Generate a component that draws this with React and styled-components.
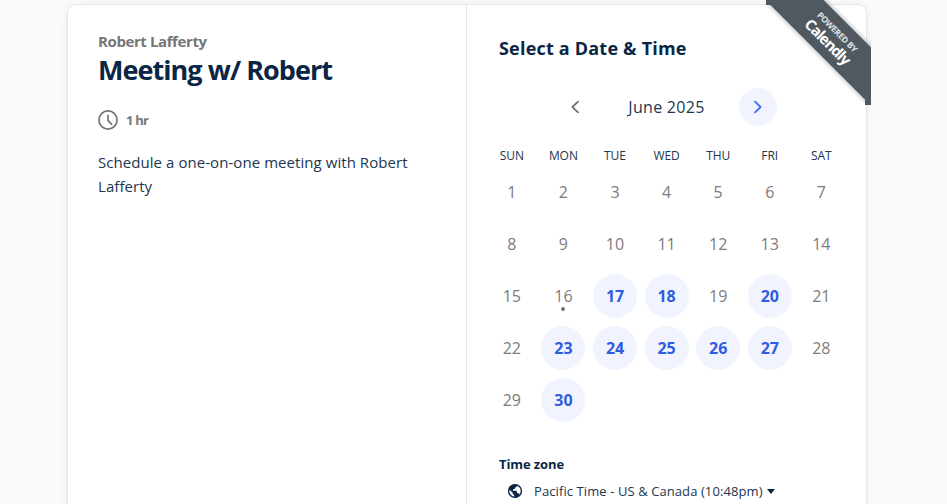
import React from "react";
import styled, { createGlobalStyle } from "styled-components";

const Global = createGlobalStyle`
  * { box-sizing: border-box; }
  html, body { margin: 0; height: 504px; overflow: hidden; background: #fafafa; }
  body { font-family: "Open Sans", "Noto Sans", sans-serif; color: #0b2545; }
  button { font: inherit; border: 0; padding: 0; background: none; }
  h1, h2, h3, p { margin: 0; }
`;

const Page = styled.main`
  height: 504px;
  overflow: hidden;
  padding: 5px 81px 0 68px;
`;
const Card = styled.section`
  position: relative;
  display: flex;
  height: 620px;
  background: #fff;
  border-radius: 8px;
  box-shadow: 0 0 0 1px rgba(26, 26, 26, 0.05), 0 1px 8px rgba(0, 0, 0, 0.08);
`;
const Details = styled.div`
  width: 399px;
  padding: 24px 30px;
  border-right: 1px solid #e7e7e7;
`;
const Text = styled.span`
  display: block;
  width: max-content;
  white-space: pre;
  font-size: ${(p) => p.$size}px;
  line-height: ${(p) => p.$line}px;
  font-weight: ${(p) => p.$weight || 400};
  letter-spacing: ${(p) => p.$track || 0}px;
  color: ${(p) => p.$color || "#213650"};
`;
const Duration = styled.div`
  display: flex;
  align-items: center;
  gap: 8px;
  height: 22px;
  margin: 22px 0 19px;
`;
const Scheduler = styled.div`
  flex: 1;
  padding: 31px 18px 0 19px;
`;
const Indent = styled.div`
  padding-left: 13px;
`;
const MonthBar = styled.div`
  display: flex;
  align-items: center;
  justify-content: space-between;
  width: 221px;
  height: 38px;
  margin: 28px 0 0 70px;
`;
const Arrow = styled.button`
  display: grid;
  place-items: center;
  width: 38px;
  height: 38px;
  border-radius: 50%;
  background: ${(p) => (p.$active ? "#f1f4ff" : "transparent")};
  color: ${(p) => (p.$active ? "#3b6bf5" : "#737373")};
`;
const Calendar = styled.div`
  display: grid;
  grid-template-columns: repeat(7, 51.6px);
  grid-template-rows: 20px repeat(5, 52px);
  margin-top: 20px;
  justify-items: center;
  align-items: center;
`;
const Weekday = styled.div`
  font-size: 12px;
  line-height: 18px;
  letter-spacing: -0.05px;
  color: #213650;
`;
const Day = styled.button`
  position: relative;
  width: 44px;
  height: 44px;
  border-radius: 50%;
  font-size: 16px;
  letter-spacing: ${(p) => (p.$open ? -0.1 : 0)}px;
  color: ${(p) => (p.$open ? "#2f5ce0" : "#7c7c7c")};
  font-weight: ${(p) => (p.$open ? 700 : 400)};
  background: ${(p) => (p.$open ? "#f1f4ff" : "transparent")};
`;
const TodayDot = styled.span`
  position: absolute;
  left: 20px;
  bottom: 7px;
  width: 4px;
  height: 4px;
  border-radius: 50%;
  background: #737373;
`;
const Zone = styled.div`
  padding: 28px 0 0 13px;
`;
const ZonePicker = styled.div`
  display: flex;
  align-items: center;
  height: 20px;
  margin-top: 7px;
  padding-left: 8px;
`;
const ZoneName = styled(Text)`
  margin: 0 4px 0 11px;
`;
const Caret = styled.i`
  border: 4px solid transparent;
  border-top: 5px solid #0b2545;
  border-bottom: 0;
`;
const RibbonBox = styled.div`
  position: absolute;
  top: -5px;
  right: -5px;
  width: 105px;
  height: 105px;
  overflow: hidden;
`;
const Fold = styled.i`
  position: absolute;
  width: 6px;
  height: 5px;
  background: #50595f;
  ${(p) => (p.$end ? "right: 0; bottom: 0;" : "left: 0; top: 0;")}
`;
const Ribbon = styled.div`
  position: absolute;
  left: -33px;
  top: 18px;
  width: 200px;
  height: 41px;
  display: flex;
  flex-direction: column;
  align-items: center;
  padding: 7px 3px 0 0;
  transform: rotate(45deg);
  background: #50595f;
  box-shadow: 0 0 5px rgba(0, 0, 0, 0.4);
`;

const Clock = () => (
  <svg width="20" height="20" viewBox="0 0 20 20" fill="none" stroke="#737373" strokeWidth="1.7" strokeLinecap="round" strokeLinejoin="round">
    <circle cx="10" cy="10" r="9.1" />
    <path d="M10 5.4v5l3.6 4" />
  </svg>
);
const Chevron = ({ next }) => (
  <svg width="10" height="14" viewBox="0 0 10 14" fill="none" stroke="currentColor" strokeWidth="1.8" strokeLinecap="round" strokeLinejoin="round">
    <path d={next ? "M2 1.7 7.6 7 2 12.3" : "M8 1.7 2.4 7 8 12.3"} />
  </svg>
);
const Globe = () => (
  <svg width="16" height="16" viewBox="0 0 16 16">
    <circle cx="8" cy="8" r="6.4" fill="#fff" stroke="#0b2545" strokeWidth="1.4" />
    <path fill="#0b2545" d="M5.6 1.8 10.4 1.8 10 3.4 8.4 4.2 8 5.7 6 6.2 6 7.7 9.6 7.8 10.2 10 11.8 10.4 12.6 12 8.8 14.6 7.2 14.3 7.2 12 5.7 10.8 5.4 9.2 1.5 6.2 3 3.2Z" />
  </svg>
);

const weekdays = ["SUN", "MON", "TUE", "WED", "THU", "FRI", "SAT"];
const openDays = new Set([17, 18, 20, 23, 24, 25, 26, 27, 30]);
const days = Array.from({ length: 30 }, (_, i) => i + 1);

export default function App() {
  return (
    <>
      <Global />
      <Page>
        <Card>
          <Details>
            <Text $size={15} $line={24} $weight={700} $track={-0.4} $color="#767676">Robert Lafferty</Text>
            <Text as="h1" $size={27} $line={34} $weight={700} $track={-0.95} $color="#0b2545">Meeting w/ Robert</Text>
            <Duration>
              <Clock />
              <Text $size={13} $line={20} $weight={700} $track={-0.8} $color="#767676">1 hr</Text>
            </Duration>
            <Text as="p" $size={15} $line={24} $track={0.06}>{"Schedule a one-on-one meeting with Robert\nLafferty"}</Text>
          </Details>
          <Scheduler>
            <Indent>
              <Text as="h2" $size={18} $line={24} $weight={700} $track={0.2} $color="#0b2545">Select a Date &amp; Time</Text>
            </Indent>
            <MonthBar>
              <Arrow aria-label="Previous month"><Chevron /></Arrow>
              <Text $size={16} $line={24} $track={0.3}>June 2025</Text>
              <Arrow $active aria-label="Next month"><Chevron next /></Arrow>
            </MonthBar>
            <Calendar>
              {weekdays.map((d) => <Weekday key={d}>{d}</Weekday>)}
              {days.map((d) => (
                <Day key={d} $open={openDays.has(d)}>{d}{d === 16 && <TodayDot />}</Day>
              ))}
            </Calendar>
            <Zone>
              <Text as="h3" $size={13} $line={20} $weight={700} $track={-0.1} $color="#0b2545">Time zone</Text>
              <ZonePicker>
                <Globe />
                <ZoneName $size={13} $line={20} $track={0.09}>Pacific Time - US &amp; Canada (10:48pm)</ZoneName>
                <Caret />
              </ZonePicker>
            </Zone>
          </Scheduler>
          <RibbonBox>
            <Ribbon>
              <Text $size={8.5} $line={11} $weight={700} $track={-0.25} $color="#e0e2e4">POWERED BY</Text>
              <Text $size={15} $line={17} $weight={700} $track={-0.9} $color="#fff">Calendly</Text>
            </Ribbon>
            <Fold />
            <Fold $end />
          </RibbonBox>
        </Card>
      </Page>
    </>
  );
}
